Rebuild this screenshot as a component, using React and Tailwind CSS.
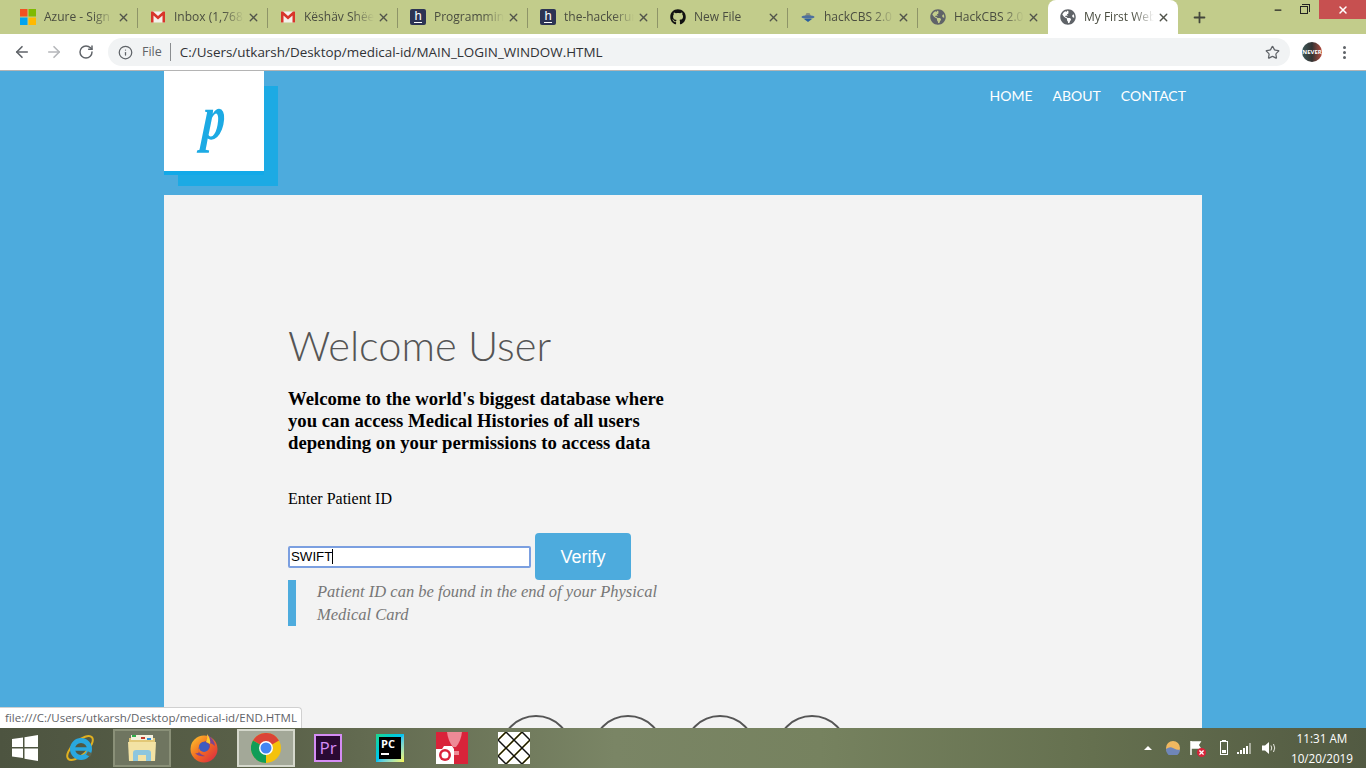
import { ArrowLeft, ArrowRight, RotateCw, Info, Star, X, Plus, Minus } from "lucide-react";
import { FaGithub, FaGlobeAmericas } from "react-icons/fa";

const GmailIcon = () => (
  <svg width="16" height="16" viewBox="0 0 16 16">
    <rect x="1" y="2.5" width="14" height="11" fill="#f4f1ec" />
    <path d="M1 13.500V2.500h2L8 7l5-4.500h2v11h-2.500V6.500L8 10.500 3.500 6.500v7z" fill="#d8352a" />
  </svg>
);

const MsIcon = () => (
  <svg width="16" height="16" viewBox="0 0 16 16">
    <rect width="7.5" height="7.5" fill="#f25022" />
    <rect x="8.5" width="7.5" height="7.5" fill="#7fba00" />
    <rect y="8.5" width="7.5" height="7.5" fill="#00a4ef" />
    <rect x="8.5" y="8.5" width="7.5" height="7.5" fill="#ffb900" />
  </svg>
);

const HackerIcon = () => (
  <div className="flex h-4 w-4 items-start justify-center rounded-[2px] bg-[#2c3454]">
    <span className="border-b border-white font-['Liberation_Sans',sans-serif] text-[13px] leading-[13px] text-white">h</span>
  </div>
);

const CbsIcon = () => (
  <svg width="16" height="16" viewBox="0 0 16 16">
    <path d="M5 7l1.500-3h3L11 7z" fill="#8a8f7a" />
    <ellipse cx="8" cy="8" rx="6.500" ry="1.800" fill="#4d6f9e" />
    <path d="M4 10h8l-4 3z" fill="#2a5f9e" />
  </svg>
);

const GlobeIcon = () => <FaGlobeAmericas size={16} className="text-[#5f6368]" />;

const tabs = [
  { title: "Azure - Sign in", icon: <MsIcon /> },
  { title: "Inbox (1,768)", icon: <GmailIcon /> },
  { title: "Këshäv Shëel", icon: <GmailIcon /> },
  { title: "Programming", icon: <HackerIcon /> },
  { title: "the-hackerun", icon: <HackerIcon /> },
  { title: "New File", icon: <FaGithub size={16} className="text-[#111]" /> },
  { title: "hackCBS 2.0", icon: <CbsIcon /> },
  { title: "HackCBS 2.0", icon: <GlobeIcon /> },
];

const Tab = ({ title, icon, active, last }) => (
  <div
    className={
      "relative flex h-[34px] w-[130px] shrink-0 items-center pl-3 " +
      (active ? "rounded-t-lg bg-white" : "")
    }
  >
    <div className="w-4 shrink-0">{icon}</div>
    <span className="ml-2 w-[70px] shrink-0 overflow-hidden whitespace-nowrap text-xs leading-4 text-[#4a4d40] [mask-image:linear-gradient(90deg,#000_70%,transparent)]">
      {title}
    </span>
    <X size={13} strokeWidth={2.5} className="ml-[3px] shrink-0 text-[#50534a]" />
    {!active && !last && <div className="absolute right-0 top-2 h-5 w-px bg-[#8e9468]" />}
  </div>
);

const TabBar = () => (
  <div className="flex h-[34px] shrink-0 items-center bg-[#c2cc8b] pl-2 font-['Open_Sans',sans-serif]">
    {tabs.map((t, i) => (
      <Tab key={i} title={t.title} icon={t.icon} last={i === tabs.length - 1} />
    ))}
    <Tab title="My First Web Page" icon={<GlobeIcon />} active />
    <Plus size={17} strokeWidth={2.5} className="ml-[13px] text-[#44473c]" />
    <div className="ml-auto flex h-full items-start">
      <div className="flex h-[19px] w-[27px] items-center justify-center">
        <Minus size={10} strokeWidth={3} className="text-[#222]" />
      </div>
      <div className="mr-[3px] flex h-[19px] w-[25px] items-center justify-center">
        <div className="relative h-2 w-2 border border-[#222]">
          <div className="absolute -right-[3px] -top-[3px] h-2 w-2 border-r border-t border-[#222]" />
        </div>
      </div>
      <div className="flex h-[19px] w-[47px] items-center justify-center bg-[#c75050]">
        <X size={12} strokeWidth={3} className="text-white" />
      </div>
    </div>
  </div>
);

const ToolBar = () => (
  <div className="flex h-[37px] shrink-0 items-center border-b border-[#b4b4b4] bg-white pl-[13px] font-['Open_Sans',sans-serif]">
    <ArrowLeft size={18} strokeWidth={2.2} className="text-[#5f6368]" />
    <ArrowRight size={18} strokeWidth={2.2} className="ml-[14px] text-[#b5b7ba]" />
    <RotateCw size={16} strokeWidth={2.2} className="ml-[15px] text-[#5f6368]" />
    <div className="ml-[14px] flex h-7 w-[1182px] items-center rounded-full bg-[#f1f3f4] pl-[10px]">
      <Info size={15} strokeWidth={2} className="text-[#5f6368]" />
      <span className="ml-[9px] text-[12.5px] text-[#5f6368]">File</span>
      <div className="ml-2 h-[18px] w-px bg-[#8a8d90]" />
      <span className="ml-[9px] text-[13.45px] text-[#303236]">C:/Users/utkarsh/Desktop/medical-id/MAIN_LOGIN_WINDOW.HTML</span>
      <Star size={15} strokeWidth={2} className="ml-auto mr-[10px] text-[#5f6368]" />
    </div>
    <div className="ml-[12px] flex h-[20px] w-[20px] items-center justify-center rounded-full bg-gradient-to-r from-[#3d5a5a] via-[#333] to-[#b5473c]">
      <span className="text-[6px] font-bold leading-none text-white">NEVER</span>
    </div>
    <div className="ml-[21px] flex flex-col gap-[2px]">
      <div className="h-[3px] w-[3px] rounded-full bg-[#5f6368]" />
      <div className="h-[3px] w-[3px] rounded-full bg-[#5f6368]" />
      <div className="h-[3px] w-[3px] rounded-full bg-[#5f6368]" />
    </div>
  </div>
);

const Header = () => (
  <div className="flex h-[124px] shrink-0 items-start justify-between">
    <div className="flex h-[100px] w-[100px] items-center justify-center bg-white shadow-[0_4px_0_#12a9e8,14px_15px_0_#1caae4]">
      <span className="-skew-x-6 scale-x-[0.72] pb-[6px] font-['Liberation_Serif',serif] text-[64px] font-bold italic leading-none text-[#1caae4]">p</span>
    </div>
    <nav className="mr-4 mt-4 flex gap-5 font-['Lato',sans-serif] text-sm uppercase leading-[18px] text-white">
      <a>Home</a>
      <a>About</a>
      <a>Contact</a>
    </nav>
  </div>
);

const Content = () => (
  <div className="flex-1 overflow-hidden bg-[#f3f3f3] pl-[124px]">
    <h1 className="mt-[122px] font-['Lato',sans-serif] text-[41.6px] font-light leading-[56px] text-[#555]">Welcome User</h1>
    <p className="mt-[15px] w-[390px] font-['Liberation_Serif',serif] text-[18.72px] font-bold leading-[22px] text-black">
      Welcome to the world's biggest database where you can access Medical Histories of all users depending on your permissions to access data
    </p>
    <p className="mt-[36px] font-['Liberation_Serif',serif] text-base leading-[18px] text-black">Enter Patient ID</p>
    <div className="mt-[25px] flex items-center">
      <div className="flex h-[22px] w-[243px] items-center rounded-[2px] border-2 border-[#7b9fe0] bg-white pl-[1px] font-['Liberation_Sans',sans-serif] text-[13.3px] text-black">
        SWIFT<span className="h-[15px] w-px bg-black" />
      </div>
      <button className="ml-1 h-[47px] w-[96px] rounded bg-[#4dabdd] font-['Liberation_Sans',sans-serif] text-lg text-white">Verify</button>
    </div>
    <div className="w-[392px] border-l-8 border-[#4dabdd] pl-[21px] font-['Liberation_Serif',serif] text-[16.5px] italic leading-[23px] text-[#777]">
      Patient ID can be found in the end of your Physical Medical Card
    </div>
    <div className="ml-[212px] mt-[89px] flex gap-5">
      <div className="h-[72px] w-[72px] shrink-0 rounded-full border-2 border-[#555]" />
      <div className="h-[72px] w-[72px] shrink-0 rounded-full border-2 border-[#555]" />
      <div className="h-[72px] w-[72px] shrink-0 rounded-full border-2 border-[#555]" />
      <div className="h-[72px] w-[72px] shrink-0 rounded-full border-2 border-[#555]" />
    </div>
  </div>
);

const TaskItem = ({ boxed, children }) => (
  <div className="flex h-10 w-[62px] shrink-0 items-center justify-center">
    <div
      className={
        "flex h-[38px] w-[58px] items-center justify-center " +
        (boxed === "chrome"
          ? "border-2 border-[#d5d8cc] bg-[#a3a898]"
          : boxed
            ? "border-2 border-[#8a9078] bg-[#6f7560]"
            : "")
      }
    >
      {children}
    </div>
  </div>
);

const WinLogo = () => (
  <svg width="26" height="26" viewBox="0 0 26 26" fill="#fff">
    <path d="M0 4l11-1.500V12H0zM12.500 2.300L26 0v12H12.500zM0 13.500h11V23L0 21.500zM12.500 13.500H26V26l-13.500-2.200z" />
  </svg>
);

const IeIcon = () => (
  <svg width="30" height="32" viewBox="0 0 30 32" fill="none">
    <ellipse cx="15" cy="16" rx="16" ry="7" transform="rotate(-42 15 16)" stroke="#e0b020" strokeWidth="2" />
    <circle cx="16" cy="17" r="8.500" stroke="#29a8e0" strokeWidth="5" />
    <path d="M9 17h15" stroke="#29a8e0" strokeWidth="3.500" />
    <path d="M22 21l4 2" stroke="#5e6650" strokeWidth="4" />
  </svg>
);

const FolderIcon = () => (
  <svg width="32" height="30" viewBox="0 0 32 30">
    <path d="M3 5h26v22H3z" fill="#e3c877" />
    <rect x="5" y="2" width="22" height="5" fill="#f5f0dc" />
    <rect x="6" y="2" width="4" height="2" fill="#2fae4a" />
    <rect x="15" y="4" width="4" height="2" fill="#c0392b" />
    <rect x="21" y="5" width="4" height="2" fill="#2f8fd8" />
    <path d="M2 9h28l-1 19H3z" fill="#f3e2a4" />
    <path d="M7 28v-8q0-3 3-3h12q3 0 3 3v8h-5v-6h-8v6z" fill="#8dc6de" />
  </svg>
);

const FirefoxIcon = () => (
  <svg width="30" height="30" viewBox="0 0 30 30">
    <defs>
      <linearGradient id="ff" x1="0" y1="0" x2="1" y2="1">
        <stop offset="0" stopColor="#ffcb2e" />
        <stop offset="0.5" stopColor="#f26a21" />
        <stop offset="1" stopColor="#d6224a" />
      </linearGradient>
    </defs>
    <circle cx="15" cy="16" r="13.500" fill="url(#ff)" />
    <path d="M18 1q8 6 8 12-3-3-6-3 2 3 0 6-3 3-6 1-2-2 0-5-4 0-5 3 0 6 7 8-6 1-10-3 3 1 4-1-2-5 2-9 1-1 5-2 3-3 1-8z" fill="#6b3fa0" opacity="0.85" />
    <circle cx="15" cy="14" r="5" fill="#3f5cc0" />
    <path d="M18 1q4 5 3 10l-4-2q2-4 1-8z" fill="#ffcb2e" />
  </svg>
);

const ChromeIcon = () => (
  <svg width="30" height="30" viewBox="0 0 30 30">
    <circle cx="15" cy="15" r="15" fill="#f4c20d" />
    <path d="M15 15L2 7.500A15 15 0 0 1 28 7.500z" fill="#db4437" />
    <path d="M15 15L2 7.500A15 15 0 0 0 15 30z" fill="#0f9d58" />
    <circle cx="15" cy="15" r="7" fill="#fff" />
    <circle cx="15" cy="15" r="5.500" fill="#4285f4" />
  </svg>
);

const PrIcon = () => (
  <div className="flex h-7 w-7 items-center justify-center border-2 border-[#d58cf5] bg-[#2a0a33] font-['Open_Sans',sans-serif] text-[17px] text-[#d58cf5]">
    Pr
  </div>
);

const PcIcon = () => (
  <div className="flex h-7 w-7 items-center justify-center bg-gradient-to-br from-[#21d789] via-[#07c3f2] to-[#fcf84a]">
    <div className="flex h-[22px] w-[22px] flex-col bg-black pl-[2px] font-['Open_Sans',sans-serif] text-[11px] font-bold leading-[13px] text-white">
      PC
      <div className="mt-[3px] h-[2px] w-2 bg-white" />
    </div>
  </div>
);

const CameraIcon = () => (
  <svg width="32" height="32" viewBox="0 0 32 32">
    <rect width="32" height="32" fill="#d9233a" />
    <path d="M11 0h15q-1 9-6 15h-3Q12 9 11 0z" fill="#ee8a96" />
    <rect x="18" y="19" width="5" height="4" fill="#ee8a96" />
    <path d="M0 17h6l2-3h8l2 3h0v15H0z" fill="#fff" />
    <circle cx="9" cy="23" r="6" fill="#d9233a" />
    <circle cx="9" cy="23" r="3.500" fill="#fff" />
  </svg>
);

const PatternIcon = () => (
  <svg width="32" height="32" viewBox="0 0 32 32">
    <rect width="32" height="32" fill="#fff" />
    <path d="M0 8L8 0M0 24L24 0M8 32L32 8M24 32l8-8" stroke="#ffe600" strokeWidth="1.500" transform="translate(1 -1)" />
    <path d="M0 8L8 0M0 24L24 0M8 32L32 8M24 32l8-8M8 0l24 24M0 8l24 24M24 0l8 8M0 24l8 8" stroke="#111" strokeWidth="1.500" fill="none" />
  </svg>
);

const TrayBall = () => (
  <svg width="14" height="14" viewBox="0 0 14 14">
    <circle cx="7" cy="7" r="7" fill="#f0b860" />
    <path d="M0 8q4-3 7-1t7 2a7 7 0 0 1-14-1z" fill="#6f86b8" />
  </svg>
);

const TrayFlag = () => (
  <div className="relative h-4 w-4">
    <svg width="16" height="16" viewBox="0 0 16 16">
      <path d="M2 1v14M2 2h9l-2 3 2 3H2" stroke="#fff" strokeWidth="1.500" fill="#fff" />
    </svg>
    <div className="absolute -bottom-[1px] -right-[1px] flex h-[9px] w-[9px] items-center justify-center rounded-full bg-[#d9233a]">
      <X size={7} strokeWidth={4} className="text-white" />
    </div>
  </div>
);

const TrayBattery = () => (
  <div className="relative flex h-[14px] w-2 flex-col justify-end border border-white p-px">
    <div className="absolute -top-[2px] left-[1px] h-px w-1 bg-white" />
    <div className="h-[3px] w-full bg-white" />
  </div>
);

const TraySignal = () => (
  <div className="flex h-[11px] items-end gap-px">
    <div className="h-[2px] w-[2px] bg-white" />
    <div className="h-1 w-[2px] bg-white" />
    <div className="h-[6px] w-[2px] bg-white" />
    <div className="h-2 w-[2px] bg-white" />
    <div className="h-[11px] w-[2px] bg-[#a9ad9d]" />
  </div>
);

const TraySpeaker = () => (
  <svg width="16" height="14" viewBox="0 0 16 14" fill="none">
    <path d="M1 4.500h3L8 1v12L4 9.500H1z" fill="#fff" />
    <path d="M10 4.500q1.500 2.500 0 5M12.500 3q2.500 4 0 8" stroke="#e8e8e0" strokeWidth="1" />
  </svg>
);

const TrayCaret = () => (
  <svg width="8" height="4" viewBox="0 0 8 4">
    <path d="M0 4l4-4 4 4z" fill="#fff" />
  </svg>
);

const TaskBar = () => (
  <div className="flex h-10 shrink-0 items-center bg-[linear-gradient(90deg,#4d5440_0%,#5a6149_20%,#7a8565_45%,#76825f_60%,#65704f_80%,#525a42_100%)] font-['Open_Sans',sans-serif]">
    <div className="flex w-[49px] shrink-0 justify-center pl-[1px]">
      <WinLogo />
    </div>
    <TaskItem><IeIcon /></TaskItem>
    <TaskItem boxed><FolderIcon /></TaskItem>
    <TaskItem><FirefoxIcon /></TaskItem>
    <TaskItem boxed="chrome"><ChromeIcon /></TaskItem>
    <TaskItem><PrIcon /></TaskItem>
    <TaskItem><PcIcon /></TaskItem>
    <TaskItem><CameraIcon /></TaskItem>
    <TaskItem><PatternIcon /></TaskItem>
    <div className="ml-auto flex items-center">
      <TrayCaret />
      <div className="ml-[14px]"><TrayBall /></div>
      <div className="ml-[9px]"><TrayFlag /></div>
      <div className="ml-[15px]"><TrayBattery /></div>
      <div className="ml-[9px]"><TraySignal /></div>
      <div className="ml-[10px]"><TraySpeaker /></div>
      <div className="ml-[14px] mr-[13px] flex flex-col items-center text-[11.7px] leading-[20px] text-white">
        <span>11:31 AM</span>
        <span>10/20/2019</span>
      </div>
    </div>
  </div>
);

export default function App() {
  return (
    <div className="flex h-[768px] w-[1366px] flex-col overflow-hidden">
      <TabBar />
      <ToolBar />
      <main className="relative flex min-h-0 flex-1 justify-center bg-[#4dabdd]">
        <div className="flex w-[1038px] flex-col">
          <Header />
          <Content />
        </div>
        <div className="absolute bottom-0 left-0 flex h-[21px] w-[302px] items-center rounded-tr border-r border-t border-[#d0d0d0] bg-white pl-[5px] font-['Open_Sans',sans-serif] text-[11.5px] text-[#5f6368]">
          file:///C:/Users/utkarsh/Desktop/medical-id/END.HTML
        </div>
      </main>
      <TaskBar />
    </div>
  );
}
